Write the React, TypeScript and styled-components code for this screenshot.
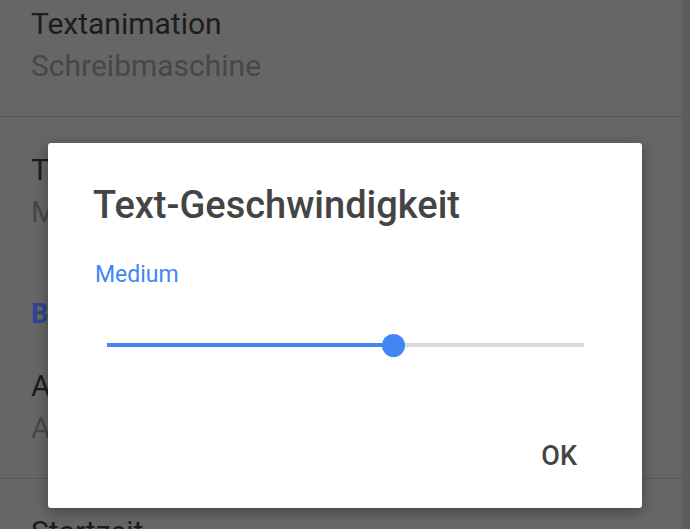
import React from 'react';
import styled, { createGlobalStyle } from 'styled-components';

const GlobalStyle = createGlobalStyle`
	html, body {
		margin: 0;
		padding: 0;
		background: #666666;
		font-family: Roboto, 'Noto Sans', 'Liberation Sans', sans-serif;
	}
`;

const Page = styled.div`
	position: relative;
	width: 690px;
	height: 529px;
	overflow: hidden;
	display: flex;
	background: #666666;
`;

const List = styled.div`
	flex: 1;
	display: flex;
	flex-direction: column;
	padding-top: 3px;
`;

const EdgeStrip = styled.div`
	width: 8px;
	background: #5d5d5d;
`;

const Item = styled.div<{ divider?: boolean }>`
	padding: 0 31px;
	${({ divider }) => divider && 'border-bottom: 1px solid #575757; padding-bottom: 29px;'}
	& + & {
		padding-top: 32px;
	}
`;

const Title = styled.div`
	font-size: 30px;
	line-height: 42px;
	color: #1c1c1c;
	white-space: nowrap;
`;

const Summary = styled.div`
	font-size: 30px;
	line-height: 42px;
	color: #474747;
	white-space: nowrap;
`;

const Category = styled.div`
	padding: 63px 31px 33px;
	font-size: 27px;
	line-height: 36px;
	font-weight: 700;
	color: #2b4690;
`;

const Overlay = styled.div`
	position: absolute;
	inset: 0;
	display: flex;
	justify-content: center;
	align-items: flex-start;
	padding-top: 143px;
`;

const Dialog = styled.div`
	width: 594px;
	height: 365px;
	box-sizing: border-box;
	background: #ffffff;
	border-radius: 3px;
	box-shadow: 0 3px 14px rgba(0, 0, 0, 0.35);
	display: flex;
	flex-direction: column;
	padding: 40px 0 29px;
`;

const DialogTitle = styled.h2`
	margin: 0;
	padding: 0 45px;
	font-size: 38px;
	line-height: 44px;
	font-weight: 500;
	color: #444444;
`;

const ValueLabel = styled.div`
	margin-top: 34px;
	padding: 0 47px;
	font-size: 23px;
	line-height: 28px;
	color: #4285f4;
`;

const SliderWrap = styled.div`
	margin: 34px 46px 0;
	padding: 0 12px 0 13px;
	height: 44px;
	display: flex;
	align-items: center;
`;

const Track = styled.div`
	position: relative;
	flex: 1;
	height: 4px;
	background: #d9d9d9;
`;

const Fill = styled.div`
	height: 100%;
	background: #4285f4;
`;

const Thumb = styled.div`
	position: absolute;
	top: 50%;
	width: 23px;
	height: 23px;
	margin: -11.5px 0 0 -11.5px;
	border-radius: 50%;
	background: #4285f4;
`;

const Actions = styled.div`
	margin-top: auto;
	display: flex;
	justify-content: flex-end;
	padding: 0 49px 0 0;
`;

const TextButton = styled.button`
	border: none;
	background: none;
	padding: 8px 16px;
	font-family: inherit;
	font-size: 27px;
	line-height: 30px;
	font-weight: 500;
	color: #444444;
	cursor: pointer;
`;

const value = 0.6;

export default function App() {
	return (
		<>
			<GlobalStyle />
			<Page>
				<List>
					<Item divider>
						<Title>Textanimation</Title>
						<Summary>Schreibmaschine</Summary>
					</Item>
					<Item>
						<Title>Text-Geschwindigkeit</Title>
						<Summary>Medium</Summary>
					</Item>
					<Category>Benachrichtigungen</Category>
					<Item divider>
						<Title>Anzeigedauer</Title>
						<Summary>Automatisch</Summary>
					</Item>
					<Item>
						<Title>Startzeit</Title>
						<Summary>Sofort</Summary>
					</Item>
				</List>
				<EdgeStrip />
				<Overlay>
					<Dialog>
						<DialogTitle>Text-Geschwindigkeit</DialogTitle>
						<ValueLabel>Medium</ValueLabel>
						<SliderWrap>
							<Track>
								<Fill style={{ width: `${value * 100}%` }} />
								<Thumb style={{ left: `${value * 100}%` }} />
							</Track>
						</SliderWrap>
						<Actions>
							<TextButton>OK</TextButton>
						</Actions>
					</Dialog>
				</Overlay>
			</Page>
		</>
	);
}
